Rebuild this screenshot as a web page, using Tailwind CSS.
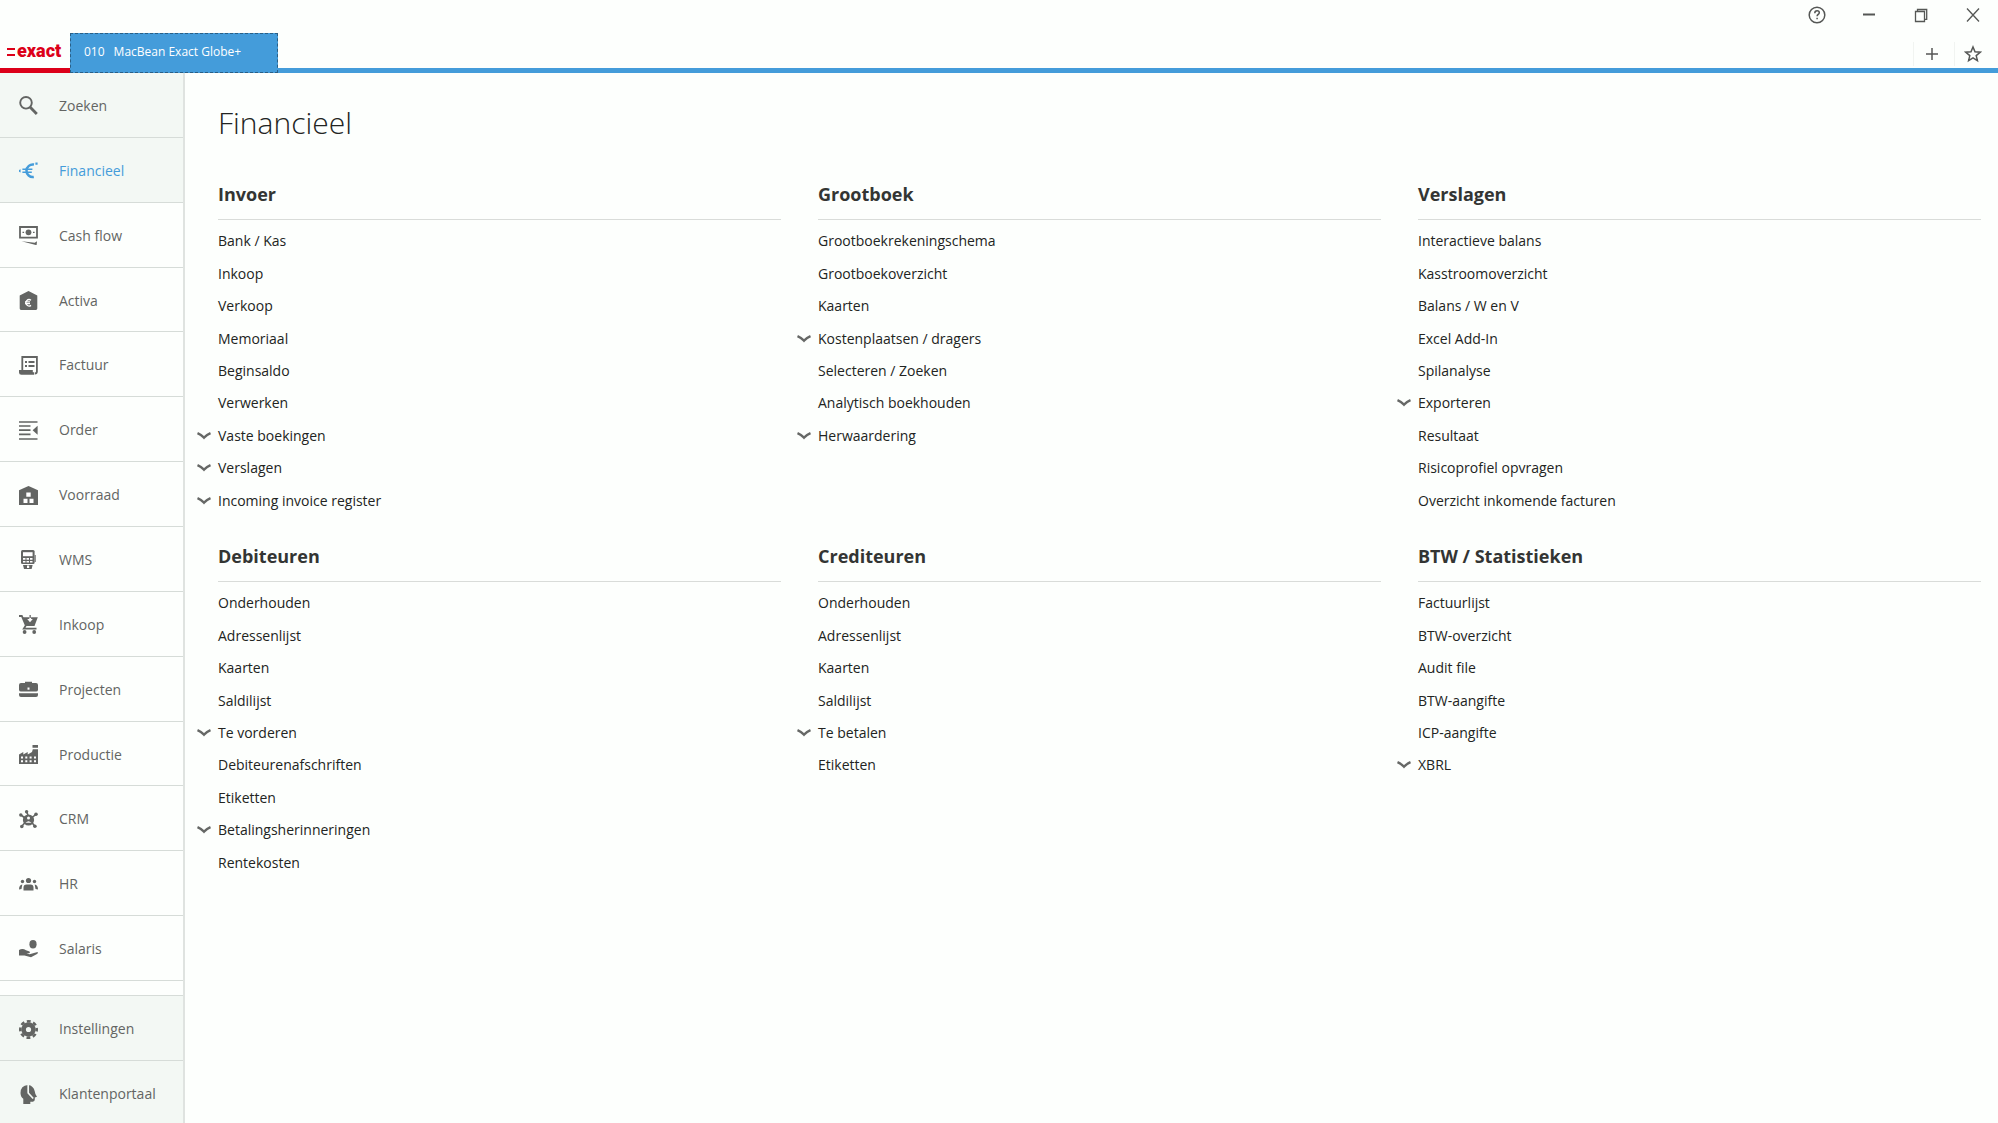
<!DOCTYPE html>
<html lang="nl">
<head>
<meta charset="utf-8">
<title>MacBean Exact Globe+</title>
<script src="https://cdn.jsdelivr.net/npm/@tailwindcss/browser@4"></script>
</head>
<body class="h-screen overflow-hidden flex flex-col bg-[#fdfffd] font-['Open_Sans',sans-serif] text-sm text-[#222422]">

<svg class="hidden" aria-hidden="true">
  <symbol id="zoeken" viewBox="0 0 19 19"><circle cx="7" cy="6.8" r="5.8" fill="none" stroke="currentColor" stroke-width="1.9"/><path d="M11 11l6.8 7" stroke="currentColor" stroke-width="2.8"/></symbol>
  <symbol id="financieel" viewBox="0 0 19 19"><path d="M15 3.6A6.3 6.3 0 1 0 14.8 16" fill="none" stroke="currentColor" stroke-width="2.5"/><path d="M3.4 8.3h10M3.4 11.2h9.400" stroke="currentColor" stroke-width="1.5"/><path d="M0 9l1.600-.8v3.400L0 10.800zM16.400 1.600h2.200v2.200h-2.200z" fill="currentColor"/></symbol>
  <symbol id="cashflow" viewBox="0 0 19 19"><path d="M1 1h17v10.600H1z" fill="none" stroke="currentColor" stroke-width="1.8"/><circle cx="9.500" cy="6.300" r="2.900" fill="currentColor"/><path d="M3.500 6.300h1.600M14 6.300h1.600" stroke="currentColor" stroke-width="1.300"/><path d="M2.500 15.200l13.200 1.600 2.300-1.600-.4 4z" fill="currentColor"/></symbol>
  <symbol id="activa" viewBox="0 0 19 19"><path d="M9.500 0L18.300 4.600V17.600a1.400 1.400 0 0 1-1.400 1.400H2A1.400 1.400 0 0 1 .7 17.600V4.600z" fill="currentColor"/><path d="M12 9.200a3.200 3.200 0 1 0 0 5.200M6 10.900h5M6 12.700h5" fill="none" stroke="#fff" stroke-width="1.300"/></symbol>
  <symbol id="factuur" viewBox="0 0 19 19"><path d="M3.300 14V1h14.600v14.500a2 2 0 0 1-2 2" fill="none" stroke="currentColor" stroke-width="1.800"/><path d="M0 14h13.800v2.200h1.400v2.600H2.400A2.400 2.400 0 0 1 0 16.400z" fill="currentColor"/><path d="M6 6h2M9.500 6H15.500M6 10h2M9.500 10H15.500" stroke="currentColor" stroke-width="1.800"/></symbol>
  <symbol id="order" viewBox="0 0 19 19"><path d="M0 1h18.500M0 5h11.500M0 9.200h11.500M0 13.400h11.500M0 18h18.500" stroke="currentColor" stroke-width="1.700"/><path d="M18.600 4.800v9L13.600 9.300z" fill="currentColor"/></symbol>
  <symbol id="voorraad" viewBox="0 0 19 19"><path d="M9.500 0L19 4.200V19H0V4.200z" fill="currentColor"/><path d="M7.300 6.400h4.400v4.400H7.300zM4.500 12.700h4V17h-4zM10.500 12.700h4V17h-4z" fill="#fff"/></symbol>
  <symbol id="wms" viewBox="0 0 19 19"><rect x="2" y="0" width="13.600" height="14" rx="1.500" fill="currentColor"/><path d="M4 2.200h9.600v4H4z" fill="#fff"/><path d="M4 8h2.500v1.800H4zM7.500 8h2.500v1.800H7.500zM11 8h2.500v1.800H11zM4 11h2.500v1.600H4zM7.500 11h2.500v1.600H7.500zM11 11h2.500v1.600H11z" fill="#fff"/><path d="M16.200 5v7" stroke="currentColor" stroke-width="1"/><path d="M4 15h9.600l-1 4H5z" fill="currentColor"/><path d="M8 15.500h2.200V18H8z" fill="#fff"/></symbol>
  <symbol id="inkoop" viewBox="0 0 19 19"><path d="M0 1h2.800l4 9.500-2 3.200h12.700" fill="none" stroke="currentColor" stroke-width="1.800"/><path d="M3.500 2.200H18.800L15.500 11H7z" fill="currentColor"/><path d="M10.300 0v4H8.200l2.800 3.200L13.800 4h-1.700V0z" fill="#fff"/><path d="M10.500 0h1.300v3h-1.300z" fill="currentColor"/><circle cx="5.600" cy="17" r="1.900" fill="currentColor"/><circle cx="15.200" cy="17" r="1.900" fill="currentColor"/></symbol>
  <symbol id="projecten" viewBox="0 0 19 19"><path d="M6 3V1.800h7V3h4a2 2 0 0 1 2 2v5a2 2 0 0 1-2 1.600H2A2 2 0 0 1 0 10V5a2 2 0 0 1 2-2zM0 13.300h19v1.700a2 2 0 0 1-2 2H2a2 2 0 0 1-2-2z" fill="currentColor"/><path d="M8.500 7.500h2v2.200h-2z" fill="#fff"/></symbol>
  <symbol id="productie" viewBox="0 0 19 19"><path d="M13.500 0H19v2.800h-5.500zM13.800 4.300H19V19H0V9.500L4.300 7v2.500L8.700 7v2.500L13 7z" fill="currentColor"/><path d="M2 11.500h2v2H2zM6.300 11.500h2v2h-2zM10.600 11.500h2v2h-2zM15 11.500h2v2h-2zM2 15.200h2v2H2zM6.300 15.200h2v2h-2zM10.600 15.200h2v2h-2zM15 15.200h2v2h-2z" fill="#fff"/></symbol>
  <symbol id="crm" viewBox="0 0 19 19"><path d="M7.500 1.700L9 5M17 4.300l-4 3.200M2 5l4 3M2.800 16.200L6.500 12M15.800 16.200L12.500 12" stroke="currentColor" stroke-width="1.600"/><circle cx="9.500" cy="10" r="5.600" fill="currentColor"/><circle cx="9.500" cy="8" r="1.500" fill="#fff"/><path d="M6.500 12.800q3-3 6 0z" fill="#fff"/><g fill="currentColor"><circle cx="7.600" cy="1.800" r="1.700"/><circle cx="17" cy="4.200" r="1.800"/><circle cx="1.800" cy="5" r="1.700"/><circle cx="2.800" cy="16.500" r="1.800"/><circle cx="15.900" cy="16.300" r="1.800"/></g></symbol>
  <symbol id="hr" viewBox="0 0 19 19"><g fill="currentColor"><circle cx="9.500" cy="5.500" r="2.600"/><circle cx="3.500" cy="6.500" r="1.700"/><circle cx="15.500" cy="6.500" r="1.700"/><path d="M4.500 15.500v-3q0-3 3-3h4q3 0 3 3v3zM0 14.500q0-4.500 3.300-5L2.500 14zM19 14.500q0-4.500-3.300-5l.8 4.500z"/></g></symbol>
  <symbol id="salaris" viewBox="0 0 19 19"><g fill="currentColor"><ellipse cx="14" cy="4.200" rx="3.600" ry="4.200"/><path d="M0 10q3.500-2 7 .2l3.500 1.300q1 1-.3 1.800l-2.700.3 3 .6L18.600 12q.6 1-.6 2l-6 3.300L5.500 15.500H0z"/></g></symbol>
  <symbol id="instellingen" viewBox="0 0 19 19"><circle cx="9.500" cy="9.500" r="4.900" fill="none" stroke="currentColor" stroke-width="4.600"/><circle cx="9.500" cy="9.500" r="8.200" fill="none" stroke="currentColor" stroke-width="2.600" stroke-dasharray="3.820 2.620" stroke-dashoffset="1.910"/></symbol>
  <symbol id="klantenportaal" viewBox="0 0 19 19"><path d="M9 0Q1.500.7 1.500 8q.1 4 2.800 5.700V19h7v-2.200h2.500q2-.2 2-2.300V12.500l2.200-.8Q15.800 8.500 15.800 6.500 14.500.5 9 0z" fill="currentColor"/><path d="M9.200 0v8l5 5.500" fill="none" stroke="#f3f8f4" stroke-width="1.700"/></symbol>
  <symbol id="chevron" viewBox="0 0 14 8"><path d="M.5 1.200q3.500 1.500 6.500 4.500 3-3 6.500-4.500" fill="none" stroke="currentColor" stroke-width="2.400"/></symbol>
</svg>

<header class="relative shrink-0 h-[73px] flex items-end">
  <a href="#" aria-label="Exact" class="w-[70px] h-10 flex items-center gap-[2px] pl-[7px] border-b-5 border-[#dc0019] text-[#dc0019]">
    <svg width="8" height="8" viewBox="0 0 8 8" class="mt-[2px]" aria-hidden="true"><path d="M0 1h8M0 7h8" stroke="currentColor" stroke-width="2"/></svg>
    <span class="font-['Roboto',sans-serif] font-black text-lg leading-5">exact</span>
  </a>
  <div class="flex-1 border-b-5 border-[#449cda] flex h-10">
    <button class="h-10 w-52 px-[13px] pb-[2px] flex items-center gap-[9px] text-left text-xs text-white bg-[#449cda] border border-dashed border-[#2a5f86]"><span>010</span><span>MacBean Exact Globe+</span></button>
  </div>
  <div class="absolute top-0 right-0 h-[30px] pr-4 flex items-center gap-[34px] text-[#555755]">
    <button aria-label="Help"><svg width="18" height="18" viewBox="0 0 18 18" fill="none" stroke="currentColor" stroke-width="1.500"><circle cx="9" cy="9" r="7.800"/><path d="M6.800 7.200q0-2.400 2.300-2.400 2.200 0 2.200 2 0 1-1.200 1.700-1 .6-1 1.800M9.100 11.700v1.600"/></svg></button>
    <button aria-label="Minimaliseren"><svg width="18" height="18" viewBox="0 0 18 18"><path d="M3 8.500h12" stroke="currentColor" stroke-width="2"/></svg></button>
    <button aria-label="Herstellen"><svg width="18" height="18" viewBox="0 0 18 18" fill="none" stroke="currentColor" stroke-width="1.300"><path d="M3.500 5.500h9v10h-9zM5.500 5.500v-2h9.200v9.800h-2"/></svg></button>
    <button aria-label="Sluiten"><svg width="18" height="18" viewBox="0 0 18 18"><path d="M3 2.500l12 13M15 2.500l-12 13" stroke="currentColor" stroke-width="1.300"/></svg></button>
  </div>
  <div class="absolute bottom-[7px] right-0 h-6 flex text-[#555755]">
    <button aria-label="Nieuw tabblad" class="w-[41px] pr-1 border-l border-[#f1f4f1] flex items-center justify-center"><svg width="14" height="14" viewBox="0 0 14 14"><path d="M1 7h12M7 1v12" stroke="currentColor" stroke-width="1.500"/></svg></button>
    <button aria-label="Favorieten" class="w-11 pr-2 border-l border-[#f1f4f1] flex items-center justify-center"><svg width="18" height="18" viewBox="0 0 18 18"><path d="M9 2l2 4.800 5.200.4-4 3.400 1.200 5L9 12.900l-4.400 2.700 1.200-5-4-3.400L7 6.800z" fill="none" stroke="currentColor" stroke-width="1.500"/></svg></button>
  </div>
</header>

<div class="flex-1 min-h-0 flex">
  <aside class="shrink-0 w-[185px] flex flex-col border-r-2 border-[#dfe3e0] text-[#636563]">
    <nav id="modules" class="flex-1 flex flex-col mb-[14px]" aria-label="Modules"></nav>
    <nav id="tools" class="h-32 overflow-hidden border-t border-[#d6dcd8] bg-[#f3f8f4]" aria-label="Beheer"></nav>
  </aside>
  <main class="flex-1 min-w-0 pl-[33px] pr-[17px] pt-7">
    <h1 class="mb-[5px] text-[30px] leading-[44px] font-light">Financieel</h1>
    <div id="groups" class="grid grid-cols-3 gap-x-[37px]"></div>
  </main>
</div>

<script>
const modules = ['Zoeken','Financieel','Cash flow','Activa','Factuur','Order','Voorraad','WMS','Inkoop','Projecten','Productie','CRM','HR','Salaris'];
const tools = ['Instellingen','Klantenportaal'];
// An entry that ends in "*" can be expanded.
const groups = {
  'Invoer': ['Bank / Kas','Inkoop','Verkoop','Memoriaal','Beginsaldo','Verwerken','Vaste boekingen*','Verslagen*','Incoming invoice register*'],
  'Grootboek': ['Grootboekrekeningschema','Grootboekoverzicht','Kaarten','Kostenplaatsen / dragers*','Selecteren / Zoeken','Analytisch boekhouden','Herwaardering*'],
  'Verslagen': ['Interactieve balans','Kasstroomoverzicht','Balans / W en V','Excel Add-In','Spilanalyse','Exporteren*','Resultaat','Risicoprofiel opvragen','Overzicht inkomende facturen'],
  'Debiteuren': ['Onderhouden','Adressenlijst','Kaarten','Saldilijst','Te vorderen*','Debiteurenafschriften','Etiketten','Betalingsherinneringen*','Rentekosten'],
  'Crediteuren': ['Onderhouden','Adressenlijst','Kaarten','Saldilijst','Te betalen*','Etiketten'],
  'BTW / Statistieken': ['Factuurlijst','BTW-overzicht','Audit file','BTW-aangifte','ICP-aangifte','XBRL*']
};
const icon = name => `<svg class="size-[19px] shrink-0" aria-hidden="true"><use href="#${name.toLowerCase().replace(' ', '')}"/></svg>`;
const tint = { 'Zoeken': 'bg-[#f3f8f4]', 'Financieel': 'bg-[#f3f8f4] text-[#449cda]' };
document.getElementById('modules').innerHTML = modules.map(m =>
  `<a href="#" class="flex-1 pt-[2px] flex items-center gap-[21px] pl-[19px] border-b border-[#d6dcd8] ${tint[m] || ''}">${icon(m)}<span>${m}</span></a>`).join('');
document.getElementById('tools').innerHTML = tools.map(m =>
  `<a href="#" class="h-[65px] pt-[2px] flex items-center gap-[21px] pl-[19px] border-b border-[#d6dcd8]">${icon(m)}<span>${m}</span></a>`).join('');
document.getElementById('groups').innerHTML = Object.entries(groups).map(([title, rows]) =>
  `<section class="pt-[31px]">
    <h2 class="pb-[11px] border-b border-[#d9dcd9] text-lg leading-[27px] font-bold text-[#333533]">${title}</h2>
    <ul class="grid grid-rows-9 h-[292px] mt-[5px] -mb-[5px]">${rows.map(r => {
      const open = r.endsWith('*');
      return `<li class="flex items-center">${open ? '<svg class="w-[14px] h-2 shrink-0 -ml-[21px] mr-[7px] text-[#666866]" aria-hidden="true"><use href="#chevron"/></svg>' : ''}<a href="#">${r.replace('*', '')}</a></li>`;
    }).join('')}</ul>
  </section>`).join('');
</script>
</body>
</html>
